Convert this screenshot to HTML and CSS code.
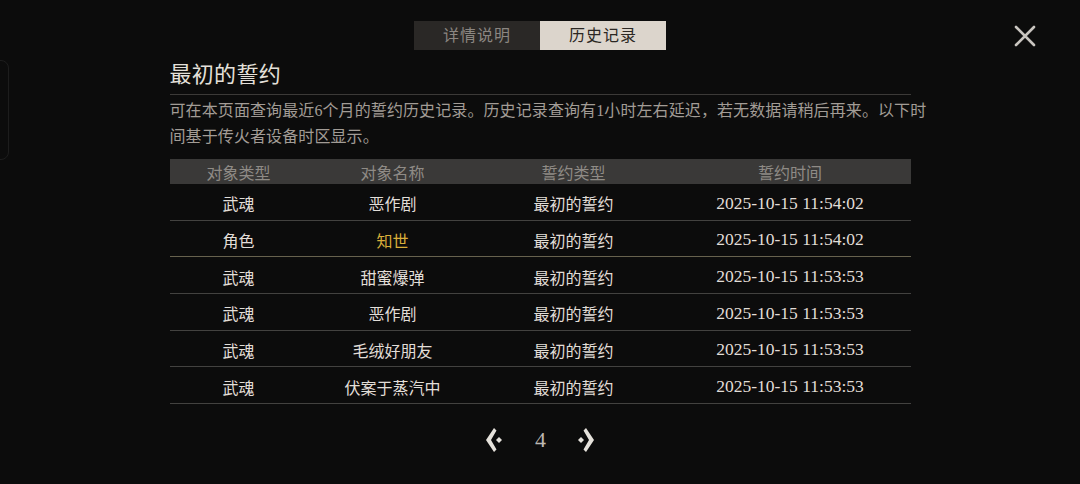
FILE: index.html
```html
<!DOCTYPE html>
<html lang="zh-CN">
<head>
<meta charset="utf-8">
<title>历史记录</title>
<link rel="stylesheet" href="styles.css">
</head>
<body>
<div class="side-tab"></div>
<button class="close" aria-label="关闭">
  <svg width="22" height="22" viewBox="0 0 22 22"><path d="M2 2 L20 20 M20 2 L2 20" stroke="#c9c5c0" stroke-width="2.6" stroke-linecap="round"/></svg>
</button>
<div class="page">
  <div class="tabs">
    <div class="tab">详情说明</div>
    <div class="tab active">历史记录</div>
  </div>
  <h1 class="title">最初的誓约</h1>
  <p class="desc">可在本页面查询最近6个月的誓约历史记录。历史记录查询有1小时左右延迟，若无数据请稍后再来。以下时间基于传火者设备时区显示。</p>
  <div class="table">
    <div class="row head"><div>对象类型</div><div>对象名称</div><div>誓约类型</div><div>誓约时间</div></div>
    <div class="row"><div>武魂</div><div>恶作剧</div><div>最初的誓约</div><div class="num">2025-10-15 11:54:02</div></div>
    <div class="row gold-line"><div>角色</div><div class="gold">知世</div><div>最初的誓约</div><div class="num">2025-10-15 11:54:02</div></div>
    <div class="row"><div>武魂</div><div>甜蜜爆弹</div><div>最初的誓约</div><div class="num">2025-10-15 11:53:53</div></div>
    <div class="row"><div>武魂</div><div>恶作剧</div><div>最初的誓约</div><div class="num">2025-10-15 11:53:53</div></div>
    <div class="row"><div>武魂</div><div>毛绒好朋友</div><div>最初的誓约</div><div class="num">2025-10-15 11:53:53</div></div>
    <div class="row"><div>武魂</div><div>伏案于蒸汽中</div><div>最初的誓约</div><div class="num">2025-10-15 11:53:53</div></div>
  </div>
  <div class="pager">
    <svg class="arrow" width="17" height="24" viewBox="0 0 17 24"><path d="M8 0 L0 12 L8 24 L10.5 21.5 L5 12 L10.5 2.5 Z" fill="#e6e2dc"/><path d="M13 9 L16 12 L13 15 L10 12 Z" fill="#e6e2dc"/></svg>
    <span class="pagenum">4</span>
    <svg class="arrow" width="17" height="24" viewBox="0 0 17 24"><path d="M9 0 L17 12 L9 24 L6.5 21.5 L12 12 L6.5 2.5 Z" fill="#e6e2dc"/><path d="M4 9 L7 12 L4 15 L1 12 Z" fill="#e6e2dc"/></svg>
  </div>
</div>
</body>
</html>
```
FILE: styles.css
```css
html, body {
  margin: 0;
  padding: 0;
}
body {
  background: #0c0c0c;
  width: 1080px;
  height: 484px;
  overflow: hidden;
  position: relative;
  font-family: "Liberation Serif", "Noto Sans CJK SC", serif;
  color: #e2ded8;
}
.side-tab {
  position: absolute;
  left: -12px;
  top: 60px;
  width: 19px;
  height: 98px;
  border: 1px solid #1d1d1d;
  border-radius: 8px;
}
.close {
  position: absolute;
  left: 1014px;
  top: 25px;
  width: 22px;
  height: 22px;
  padding: 0;
  border: 0;
  background: none;
}
.page {
  width: 741px;
  margin: 0 auto;
  padding-top: 21px;
  display: flex;
  flex-direction: column;
}
.tabs {
  display: flex;
  justify-content: center;
}
.tab {
  width: 126px;
  height: 29px;
  line-height: 29px;
  text-align: center;
  font-size: 16px;
  letter-spacing: 1px;
  background: #2a2826;
  color: #8b8681;
}
.tab.active {
  background: #dcd5cc;
  color: #2b2723;
}
.title {
  margin: 11px 0 0;
  font-size: 22px;
  font-weight: normal;
  line-height: 28px;
  height: 33px;
  color: #e4e0da;
  border-bottom: 1px solid #3c3a38;
  letter-spacing: 0.3px;
}
.desc {
  margin: 3px 0 0;
  width: 765px;
  font-size: 16px;
  line-height: 26px;
  letter-spacing: 0.1px;
  color: #a29c96;
}
.table {
  margin-top: 9px;
  display: flex;
  flex-direction: column;
}
.row {
  display: grid;
  grid-template-columns: 138px 170px 192px 241px;
  height: 36.67px;
  box-sizing: border-box;
  padding-top: 3px;
  border-bottom: 1px solid #434240;
  align-items: center;
  text-align: center;
  font-size: 16px;
  color: #e2ded8;
}
.row.head {
  height: 25px;
  padding-top: 0;
  background: #3a3938;
  border-bottom: 0;
  color: #8f8b86;
}
.row.gold-line {
  border-bottom-color: #67624e;
}
.gold {
  color: #d9ae3a;
}
.num {
  font-size: 17.5px;
}
.pager {
  margin-top: 23px;
  display: flex;
  justify-content: center;
  align-items: center;
  gap: 32px;
}
.pagenum {
  font-size: 22px;
  color: #bdb8b2;
  width: 10px;
  text-align: center;
}
```
